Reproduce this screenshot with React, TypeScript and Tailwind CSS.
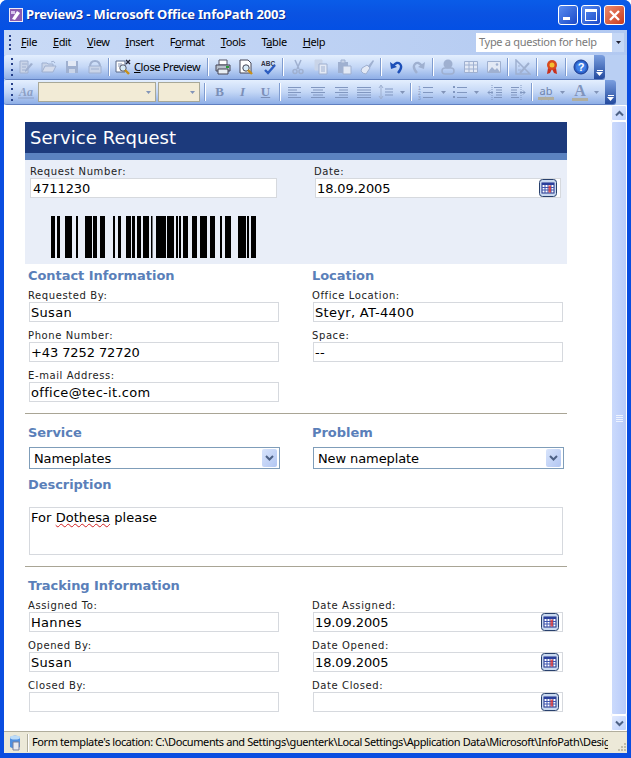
import React from "react";

const BARS: [number, number][] = [
  [51, 4], [57, 3], [65, 7], [76, 2], [85, 7], [93, 4], [100, 5], [113, 2], [118, 3], [126, 5],
  [132, 3], [137, 4], [143, 6], [151, 1.5], [156, 10], [167, 7], [176, 2], [179, 2], [183, 5],
  [192, 5], [200, 7], [210, 5], [220, 2], [225, 6], [238, 8], [247, 2], [251, 5],
];

const Ico = ({ children }: { children: React.ReactNode }) => (
  <svg width="16" height="16" viewBox="0 0 16 16" fill="none">{children}</svg>
);

// disabled toolbar icons are washed out blue-grey
const dim = "#9fb0d0";
const dim2 = "#c9d4e8";

const icons: Record<string, React.ReactNode> = {
  edit: <><path d="M2 2h8v12H2z" fill={dim2} stroke={dim} /><path d="M4 5h5M4 8h4M4 11h3" stroke={dim} /><path d="M7 11l6-7 2 1-6 7-2 1z" fill={dim} /></>,
  open: <><path d="M1 13V4h5l1 1h5v2" fill={dim2} stroke={dim} /><path d="M1 13l3-6h11l-3 6z" fill="#d5dcec" stroke={dim} /><path d="M10 3q3-2 4 1" stroke={dim} /></>,
  save: <><path d="M2 2h12v12H2z" fill={dim} /><path d="M4 2h8v5H4z" fill="#e3e9f5" /><path d="M5 10h6v4H5z" fill={dim2} /></>,
  perm: <><path d="M3 8q0-6 5-6t5 6" stroke={dim} strokeWidth="2" /><path d="M2 7h12v7H2z" fill={dim2} stroke={dim} /><path d="M4 10h8" stroke={dim} /></>,
  close: <><path d="M1 2h9v11H1z" fill="#fff" stroke="#5a6a8a" /><path d="M3 5h4M3 7h3" stroke="#8898b8" /><circle cx="8" cy="9" r="3.2" fill="#d8ecf8" stroke="#556" /><path d="M10 11l4 4" stroke="#c89018" strokeWidth="2.4" /><path d="M11 1l4 4M15 1l-4 4" stroke="#223" strokeWidth="1.4" /></>,
  print: <><path d="M4 1h8v5H4z" fill="#fff" stroke="#556" /><path d="M1 6h14v6H1z" fill="#b8c0cc" stroke="#445" /><path d="M3 10h10v5H3z" fill="#e8eef4" stroke="#445" /><path d="M11 8h3" stroke="#2a9a3a" strokeWidth="2" /></>,
  preview: <><path d="M2 1h8l3 3v10H2z" fill="#fff" stroke="#445" /><circle cx="8" cy="9" r="3.2" fill="#d8ecf8" stroke="#445" /><path d="M10 11l4 4" stroke="#c89018" strokeWidth="2.4" /></>,
  spell: <><text x="0" y="6.5" fontSize="6.5" fontWeight="700" fill="#334" fontFamily="Liberation Sans, sans-serif">ABC</text><path d="M4 11l3 3 7-8" stroke="#2c5cc0" strokeWidth="2.4" /></>,
  cut: <><path d="M5 1l4 9M11 1l-4 9" stroke={dim} strokeWidth="1.5" /><circle cx="5" cy="12.5" r="2" stroke={dim} strokeWidth="1.5" /><circle cx="11" cy="12.5" r="2" stroke={dim} strokeWidth="1.5" /></>,
  copy: <><path d="M2 1h7v10H2z" fill={dim2} stroke={dim2} /><path d="M6 5h8v10H6z" fill="#e3e9f5" stroke={dim} /><path d="M8 8h4M8 10h4M8 12h4" stroke={dim} /></>,
  paste: <><path d="M2 3h10v11H2z" fill={dim} /><path d="M5 1h4v3H5z" fill={dim2} stroke={dim} /><path d="M7 7h8v8H7z" fill="#e3e9f5" stroke={dim} /></>,
  brush: <><path d="M9 7l5-6 1 1-4 7z" fill={dim} /><path d="M3 9l5-3 3 3-4 6q-3 0-5-3z" fill="#e3e9f5" stroke={dim} /></>,
  undo: <><path d="M5 7q4-5 7-2t-2 9" stroke="#1d4fb8" strokeWidth="2.4" /><path d="M2 3l1 7 6-2z" fill="#1d4fb8" /></>,
  redo: <><path d="M11 7q-4-5-7-2t2 9" stroke={dim} strokeWidth="2.4" /><path d="M14 3l-1 7-6-2z" fill={dim} /></>,
  link: <><circle cx="8" cy="5" r="4.5" fill={dim} /><path d="M2 12q0-3 3-3h6q3 0 3 3t-3 3H5q-3 0-3-3z" stroke={dim} strokeWidth="1.5" /></>,
  table: <><path d="M1.5 2.5h13v11h-13z" fill="#e3e9f5" stroke={dim} /><path d="M1.5 6h13M1.5 10h13M6 2.5v11M10.500 2.500v11" stroke={dim} /></>,
  image: <><path d="M1.500 2.500h13v11h-13z" fill="#e3e9f5" stroke={dim} /><path d="M2 13l4-5 3 3 2-2 3 4z" fill={dim} /><circle cx="11" cy="5.500" r="1.300" fill={dim} /></>,
  ruler: <><path d="M1 1v14h14z" fill="none" stroke={dim} strokeWidth="1.500" /><path d="M5 14l9-10" stroke={dim} strokeWidth="2" /><path d="M3 11h3M3 7h2" stroke={dim} /></>,
  medal: <><path d="M4 9l-1 6 3-1 2-4zM12 9l1 6-3-1-2-4z" fill="#c8301c" /><circle cx="8" cy="6" r="5" fill="#d84a20" /><circle cx="8" cy="6" r="2.500" fill="#f4c030" /></>,
  help: <><circle cx="8" cy="8" r="7" fill="#2c62c8" stroke="#1a3a90" /><circle cx="8" cy="8" r="5" fill="#3f80e8" /><text x="8" y="12" textAnchor="middle" fontSize="11" fontWeight="700" fill="#fff" fontFamily="Liberation Sans, sans-serif">?</text></>,
  style: <><text x="1" y="12" fontSize="12" fontWeight="700" fontStyle="italic" fill="#8c9fc4" fontFamily="Liberation Serif, serif">Aa</text><path d="M0 14h16" stroke="#8c9fc4" /></>,
  left: <path d="M1 3.500h13M1 6h9M1 8.500h13M1 11h9M1 13.500h13" stroke="#8197c0" />,
  center: <path d="M1 3.500h14M3 6h10M1 8.500h14M3 11h10M1 13.500h14" stroke="#8197c0" />,
  right: <path d="M2 3.500h13M6 6h9M2 8.500h13M6 11h9M2 13.500h13" stroke="#8197c0" />,
  justify: <path d="M1 3.500h14M1 6h14M1 8.500h14M1 11h14M1 13.500h14" stroke="#8197c0" />,
  spacing: <><path d="M3 2v12M1 4l2-3 2 3M1 12l2 3 2-3" stroke="#9fb0d0" /><path d="M7 5h8M7 8h8M7 11h8" stroke="#8197c0" /></>,
  numbers: <><text x="0" y="6" fontSize="5" fill="#8197c0" fontFamily="Liberation Sans, sans-serif">1</text><text x="0" y="11" fontSize="5" fill="#8197c0" fontFamily="Liberation Sans, sans-serif">2</text><text x="0" y="16" fontSize="5" fill="#8197c0" fontFamily="Liberation Sans, sans-serif">3</text><path d="M5 3.500h10M5 8.500h10M5 13.500h10" stroke="#8197c0" /></>,
  bullets: <><path d="M1 2h2v2H1zM1 7h2v2H1zM1 12h2v2H1z" fill="#8197c0" /><path d="M5 3.500h10M5 8.500h10M5 13.500h10" stroke="#8197c0" /></>,
  outdent: <><path d="M7 3.500h8M9 6h6M9 8.500h6M9 11h6M7 13.500h8" stroke="#8197c0" /><path d="M6 8.500H1M3 6.500l-2 2 2 2" stroke="#8197c0" /><path d="M5 1v15" stroke="#8197c0" strokeDasharray="1 1" /></>,
  indent: <><path d="M1 3.500h8M1 6h6M1 8.500h6M1 11h6M1 13.500h8" stroke="#8197c0" /><path d="M10 8.500h5M13 6.500l2 2-2 2" stroke="#8197c0" /><path d="M11 1v15" stroke="#8197c0" strokeDasharray="1 1" /></>,
};

const Slot = ({ name }: { name: string }) => (
  <span className="w-[23px] h-[22px] flex items-center justify-center shrink-0">
    <Ico>{icons[name]}</Ico>
  </span>
);

const Sep = () => <span className="w-[2px] h-[18px] bg-[#7f9cd0] border-r border-white mx-[2px] shrink-0" />;

const Grip = () => (
  <span className="w-[3px] h-[18px] ml-[7px] flex flex-col justify-between shrink-0">
    {[0, 1, 2, 3].map((i) => <span key={i} className="w-[2px] h-[2px] bg-[#27418a]" />)}
  </span>
);

const Arrow = ({ className = "" }: { className?: string }) => (
  <svg width="5" height="3" viewBox="0 0 5 3" className={`shrink-0 ${className}`}><path d="M0 0h5L2.500 3z" fill="#8294b8" /></svg>
);

const ToolEnd = () => (
  <span className="w-[11px] h-full rounded-r-[3px] bg-gradient-to-b from-[#7b9fdf] to-[#244a9e] flex flex-col items-center justify-end pb-[3px] shrink-0">
    <span className="w-[6px] h-[1px] bg-white mb-[1px]" />
    <svg width="7" height="4" viewBox="0 0 7 4"><path d="M0 0h7L3.500 4z" fill="#fff" /></svg>
  </span>
);

const barBg = "bg-gradient-to-b from-[#e4effe] via-[#c4d7f6] to-[#8eaee6] border-b border-[#5f7fc0]";

const Label = ({ children }: { children: React.ReactNode }) => (
  <div className="h-[13px] text-[10px] leading-[13px] text-[#222] tracking-[0.6px] whitespace-nowrap">{children}</div>
);

const Calendar = () => (
  <svg width="18" height="18" viewBox="0 0 18 18" className="shrink-0">
    <rect x="0.500" y="0.500" width="17" height="17" rx="3" fill="#c9d9f0" stroke="#28406c" />
    <rect x="3" y="4" width="12" height="10" fill="#fff" stroke="#1c2f88" />
    <path d="M3 4h12v2H3z" fill="#2a3f9c" />
    <path d="M3 8.500h12M3 11h12M6 6v8M9 6v8M12 6v8" stroke="#3d55b0" />
    <path d="M9.500 6.500h2.500v7H9.500z" fill="#d83434" opacity="0.8" />
  </svg>
);

type InputProps = { value?: string; cal?: boolean; num?: boolean; inset?: boolean; className: string };

const Input = ({ value, cal, num, inset, className }: InputProps) => (
  <div className={`h-[20px] bg-white border border-[#d6d9de] flex items-center justify-between pl-[1px] pr-[3px] text-[13px] text-black whitespace-nowrap ${num ? "tracking-[-0.1px]" : "tracking-[0.3px]"} ${className}`}>
    <span className={`mt-[2px] ${inset ? "ml-[1px]" : ""}`}>{value}</span>
    {cal && <Calendar />}
  </div>
);

const Field = ({ label, ...rest }: InputProps & { label: string }) => (
  <div className="mb-[7px]">
    <Label>{label}</Label>
    <Input {...rest} />
  </div>
);

const Heading = ({ children }: { children: React.ReactNode }) => (
  <div className="h-[20px] text-[13px] leading-[20px] font-bold text-[#5a7fb9] tracking-[-0.05px] whitespace-nowrap">{children}</div>
);

const Select = ({ value }: { value: string }) => (
  <div className="h-[22px] w-[251px] bg-white border border-[#7f9db9] flex items-center justify-between pl-[4px] pr-[2px] text-[13px] tracking-[-0.1px] text-black">
    <span className="mt-[2px]">{value}</span>
    <span className="w-[15px] h-[18px] rounded-[2px] bg-gradient-to-br from-[#d8e4fb] to-[#b2c6f2] flex items-center justify-center">
      <svg width="9" height="7" viewBox="0 0 9 7"><path d="M1 1l3.500 3.500L8 1" stroke="#4d6185" strokeWidth="2" fill="none" /></svg>
    </span>
  </div>
);

const ScrollButton = ({ up }: { up?: boolean }) => (
  <div className="h-[16px] rounded-[2px] border border-white bg-gradient-to-br from-[#e3ebfe] to-[#bccffb] flex items-center justify-center">
    <svg width="9" height="7" viewBox="0 0 9 7"><path d={up ? "M1 5.500l3.500-3.500L8 5.500" : "M1 1.500l3.500 3.500L8 1.500"} stroke="#4d6185" strokeWidth="2" fill="none" /></svg>
  </div>
);

export default function App() {
  return (
    <div className="w-[631px] h-[758px] flex flex-col overflow-hidden rounded-t-[7px] bg-[#0a4de0] font-['Noto_Sans',sans-serif]">
      {/* Title bar */}
      <div className="h-[30px] shrink-0 flex items-center pl-[9px] pr-[6px] bg-gradient-to-b from-[#0a5ce8] via-[#0a52e2] to-[#0450e4]">
        <svg width="14" height="14" viewBox="0 0 14 14" className="shrink-0">
          <rect width="14" height="14" fill="#efeaf6" />
          <rect x="1" y="1" width="12" height="12" fill="#8a5cb0" />
          <path d="M3 11l5-8 3 2-5 7z" fill="#fff" />
          <path d="M2 3h4v3H2z" fill="#d8c4ec" />
        </svg>
        <span className="ml-[3px] text-[13px] font-bold tracking-[-0.17px] text-white whitespace-nowrap [text-shadow:1px_1px_0_#0a2a90]">Preview3 - Microsoft Office InfoPath 2003</span>
        <div className="ml-auto flex gap-[3px]">
          <span className="w-[20px] h-[20px] rounded-[3px] border border-white bg-gradient-to-br from-[#5a8cf0] to-[#1c48c8] flex items-end pl-[4px] pb-[4px]">
            <span className="w-[7px] h-[3px] bg-white" />
          </span>
          <span className="w-[20px] h-[20px] rounded-[3px] border border-white bg-gradient-to-br from-[#5a8cf0] to-[#1c48c8] flex items-center justify-center">
            <span className="w-[12px] h-[12px] border border-white border-t-[3px]" />
          </span>
          <span className="w-[21px] h-[20px] rounded-[3px] border border-white bg-gradient-to-br from-[#ec8a6c] to-[#c8381c] flex items-center justify-center">
            <svg width="13" height="13" viewBox="0 0 13 13"><path d="M2 2l9 9M11 2l-9 9" stroke="#fff" strokeWidth="2.400" /></svg>
          </span>
        </div>
      </div>

      <div className="flex-1 min-h-0 flex flex-col mx-[4px] mb-[5px] bg-[#b9cff3]">
        {/* Menu bar */}
        <div className="h-[25px] shrink-0 flex items-center bg-gradient-to-r from-[#c9daf6] to-[#b2c9f1] text-[11px] text-black">
          <span className="w-[3px] h-[16px] ml-[5px] flex flex-col justify-between shrink-0">
            {[0, 1, 2, 3].map((i) => <span key={i} className="w-[2px] h-[2px] bg-[#27418a]" />)}
          </span>
          <div className="flex gap-[16px] ml-[9px] tracking-[-0.4px]">
            <span><u>F</u>ile</span>
            <span><u>E</u>dit</span>
            <span><u>V</u>iew</span>
            <span><u>I</u>nsert</span>
            <span>F<u>o</u>rmat</span>
            <span><u>T</u>ools</span>
            <span>T<u>a</u>ble</span>
            <span><u>H</u>elp</span>
          </div>
          <div className="ml-auto mr-[3px] h-[19px] w-[148px] bg-white flex items-center pl-[3px] text-[#7a7a7a] text-[11px] tracking-[-0.3px]">
            <span>Type a question for help</span>
            <span className="ml-auto w-[12px] h-full bg-[#c6d8f6] flex items-center justify-center">
              <svg width="5" height="3" viewBox="0 0 5 3"><path d="M0 0h5L2.500 3z" fill="#223" /></svg>
            </span>
          </div>
        </div>

        {/* Standard toolbar */}
        <div className={`h-[25px] w-[601px] shrink-0 flex items-center rounded-[3px] ${barBg} text-[11px] text-black`}>
          <Grip />
          <Slot name="edit" /><Slot name="open" /><Slot name="save" /><Slot name="perm" />
          <Sep />
          <span className="w-[93px] flex items-center gap-[3px] pl-[3px] whitespace-nowrap shrink-0">
            <Ico>{icons.close}</Ico>
            <span className="tracking-[-0.35px]"><u>C</u>lose Preview</span>
          </span>
          <Sep />
          <Slot name="print" /><Slot name="preview" /><Slot name="spell" />
          <Sep />
          <Slot name="cut" /><Slot name="copy" /><Slot name="paste" /><Slot name="brush" />
          <Sep />
          <Slot name="undo" /><Slot name="redo" />
          <Sep />
          <Slot name="link" /><Slot name="table" /><Slot name="image" />
          <Sep />
          <Slot name="ruler" />
          <Sep />
          <Slot name="medal" />
          <Sep />
          <Slot name="help" />
          <span className="flex-1" />
          <ToolEnd />
        </div>

        {/* Formatting toolbar */}
        <div className={`h-[25px] w-[612px] shrink-0 flex items-center rounded-[3px] ${barBg}`}>
          <Grip />
          <Slot name="style" />
          <span className="w-[118px] h-[20px] ml-[1px] bg-[#f2ebd6] border border-[#a8a898] flex items-center justify-end pr-[4px] shrink-0"><Arrow /></span>
          <span className="w-[42px] h-[20px] ml-[2px] bg-[#f2ebd6] border border-[#a8a898] flex items-center justify-end pr-[4px] shrink-0"><Arrow /></span>
          <span className="w-[2px] shrink-0" />
          <Sep />
          {[["B", "font-bold"], ["I", "italic font-bold"], ["U", "underline font-bold"]].map(([t, c]) => (
            <span key={t} className={`w-[23px] text-center text-[13px] text-[#7b8fb8] font-['Liberation_Serif',serif] shrink-0 ${c}`}>{t}</span>
          ))}
          <Sep />
          <Slot name="left" /><Slot name="center" /><Slot name="right" /><Slot name="justify" />
          <span className="w-[22px] h-[22px] flex items-center justify-center shrink-0"><Ico>{icons.spacing}</Ico></span>
          <Arrow className="ml-[3px]" />
          <span className="w-[3px] shrink-0" />
          <Sep />
          <span className="w-[24px] h-[22px] flex items-center justify-center shrink-0"><Ico>{icons.numbers}</Ico></span>
          <Arrow className="ml-[3px]" />
          <span className="w-[5px] shrink-0" />
          <span className="w-[18px] h-[22px] flex items-center justify-center shrink-0"><Ico>{icons.bullets}</Ico></span>
          <Arrow className="ml-[5px]" />
          <span className="w-[4px] shrink-0" />
          <Slot name="outdent" /><Slot name="indent" />
          <Sep />
          <span className="w-[22px] h-[22px] flex flex-col items-center justify-center shrink-0 text-[11px] leading-[13px] text-[#6f84ae]">
            <span className="underline decoration-wavy decoration-1">ab</span>
            <span className="w-[16px] h-[3px] bg-[#b0aea0]" />
          </span>
          <Arrow className="ml-[3px]" />
          <span className="w-[6px] shrink-0" />
          <span className="w-[18px] h-[22px] flex flex-col items-center justify-center shrink-0 text-[16px] leading-[14px] font-bold text-[#8094bc] font-['Liberation_Serif',serif]">
            <span>A</span>
            <span className="w-[16px] h-[3px] bg-[#b0aea0]" />
          </span>
          <span className="w-[5px] shrink-0" />
          <Arrow />
          <span className="flex-1" />
          <ToolEnd />
        </div>

        {/* Form + scrollbar */}
        <div className="flex-1 min-h-0 flex bg-white font-['DejaVu_Sans',sans-serif]">
          <div className="w-[542px] ml-[21px] pt-[17px] shrink-0">
            <div className="h-[31px] bg-[#1c3a7c] text-white text-[18px] leading-[31px] pl-[5px] tracking-[0.05px]">Service Request</div>
            <div className="h-[7px] bg-[#5b82c0]" />

            <div className="h-[104px] bg-[#e9eef8] pt-[5px]">
              <div className="flex">
                <div className="w-[284px] pl-[5px]">
                  <Label>Request Number:</Label>
                  <Input value="4711230" num inset className="w-[247px]" />
                </div>
                <div className="pl-[5px]">
                  <Label>Date:</Label>
                  <Input value="18.09.2005" num cal className="w-[246px] ml-[1px]" />
                </div>
              </div>
              <svg width="206" height="42" viewBox="51 0 206 42" className="ml-[26px] mt-[18px] block">
                {BARS.map(([x, w]) => <rect key={x} x={x} y="0" width={w} height="42" fill="#000" />)}
              </svg>
            </div>

            <div className="flex mt-[2px]">
              <div className="w-[287px] pl-[3px]">
                <div className="mb-[3px]"><Heading>Contact Information</Heading></div>
                <Field label="Requested By:" value="Susan" className="w-[250px] ml-[1px]" />
                <Field label="Phone Number:" value="+43 7252 72720" num className="w-[250px] ml-[1px]" />
                <Field label="E-mail Address:" value="office@tec-it.com" className="w-[250px] ml-[1px]" />
              </div>
              <div>
                <div className="mb-[3px]"><Heading>Location</Heading></div>
                <Field label="Office Location:" value="Steyr, AT-4400" className="w-[250px] ml-[1px]" />
                <Field label="Space:" value="--" className="w-[250px] ml-[1px]" />
              </div>
            </div>

            <div className="h-[1px] bg-[#a9a595] mt-[4px]" />

            <div className="flex mt-[9px]">
              <div className="w-[287px] pl-[3px]">
                <div className="mb-[4px]"><Heading>Service</Heading></div>
                <div className="ml-[1px]"><Select value="Nameplates" /></div>
              </div>
              <div>
                <div className="mb-[4px]"><Heading>Problem</Heading></div>
                <div className="ml-[1px]"><Select value="New nameplate" /></div>
              </div>
            </div>

            <div className="pl-[3px] mt-[6px]"><Heading>Description</Heading></div>
            <div className="ml-[4px] mt-[12px] w-[534px] h-[48px] border border-[#d6d9de] px-[1px] pt-[2px] text-[13px] leading-[16px] tracking-[0.05px] text-black">
              For <span className="underline decoration-wavy decoration-[#d02020] decoration-1">Dothesa</span> please
            </div>

            <div className="h-[1px] bg-[#a9a595] mt-[11px]" />

            <div className="flex mt-[9px]">
              <div className="w-[287px] pl-[3px]">
                <div className="mb-[3px]"><Heading>Tracking Information</Heading></div>
                <Field label="Assigned To:" value="Hannes" className="w-[250px] ml-[1px]" />
                <Field label="Opened By:" value="Susan" className="w-[250px] ml-[1px]" />
                <Field label="Closed By:" className="w-[250px] ml-[1px]" />
              </div>
              <div className="pt-[23px]">
                <Field label="Date Assigned:" value="19.09.2005" num cal className="w-[250px] ml-[1px]" />
                <Field label="Date Opened:" value="18.09.2005" num cal className="w-[250px] ml-[1px]" />
                <Field label="Date Closed:" cal className="w-[250px] ml-[1px]" />
              </div>
            </div>
          </div>

          <div className="ml-auto w-[16px] flex flex-col bg-[#f4f6fd] shrink-0">
            <ScrollButton up />
            <div className="flex-1 rounded-[2px] border border-white bg-gradient-to-r from-[#cbdafc] to-[#b8cbfa] flex flex-col items-center justify-center gap-[1px]">
              {[0, 1, 2, 3].map((i) => <span key={i} className="w-[7px] h-[1px] bg-[#eef3fe]" />)}
            </div>
            <ScrollButton />
          </div>
        </div>

        {/* Status bar */}
        <div className="h-[22px] shrink-0 flex items-center bg-[#ece9d8] border-t border-[#b0ad9c] text-[11px] text-black overflow-hidden">
          <svg width="14" height="18" viewBox="0 0 14 18" className="ml-[4px] shrink-0">
            <path d="M2 3q5-3 10 0v10q-5 3-10 0z" fill="#4f8fe0" />
            <ellipse cx="7" cy="3.500" rx="5" ry="2" fill="#bcdcf8" />
            <path d="M5 8h6v8H5z" fill="#e8eaf0" stroke="#7a809a" />
          </svg>
          <span className="w-[2px] h-[18px] bg-[#b0ad9c] border-r border-white ml-[5px] shrink-0" />
          <span className="ml-[3px] w-[576px] overflow-hidden whitespace-nowrap shrink-0 tracking-[-0.4px]">Form template's location: C:\Documents and Settings\guenterk\Local Settings\Application Data\Microsoft\InfoPath\Design</span>
          <svg width="11" height="11" viewBox="0 0 11 11" className="ml-auto self-end shrink-0">
            <path d="M8 1h2v2H8zM5 4h2v2H5zM8 4h2v2H8zM2 7h2v2H2zM5 7h2v2H5zM8 7h2v2H8z" fill="#c0bda8" />
          </svg>
        </div>
      </div>
    </div>
  );
}
